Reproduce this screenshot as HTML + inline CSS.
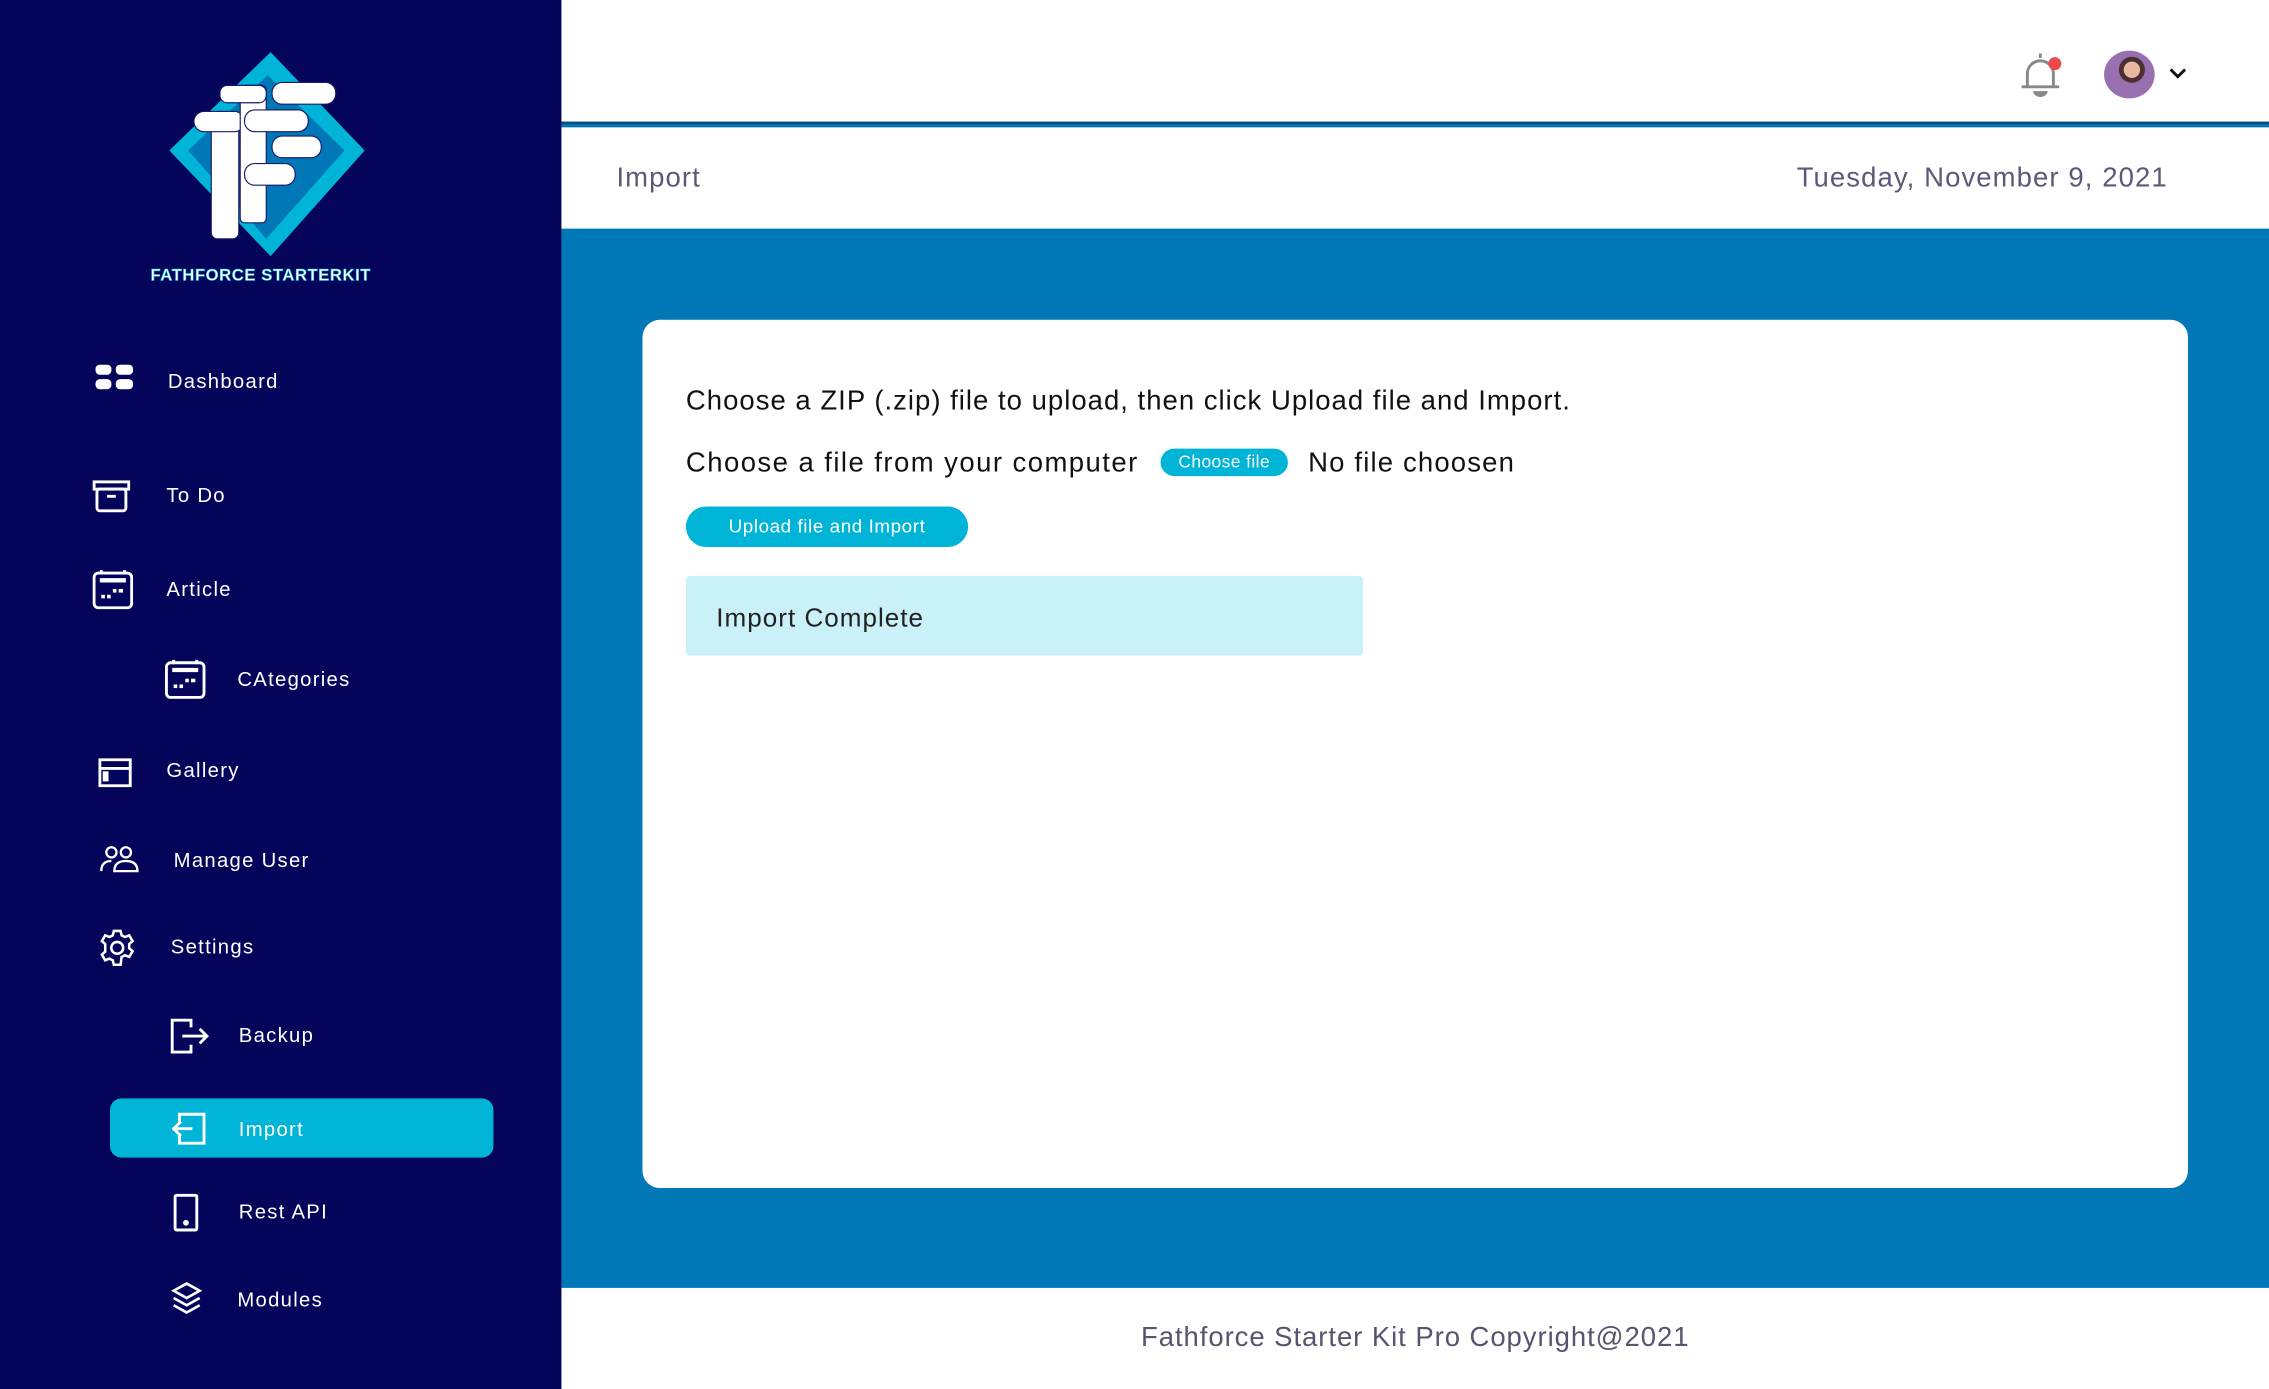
<!DOCTYPE html>
<html><head><meta charset="utf-8"><style>
*{margin:0;padding:0;box-sizing:border-box}
html,body{width:2269px;height:1389px;overflow:hidden;background:#fff}
#w{width:1568px;height:960px;transform:scale(1.44707);transform-origin:0 0;position:relative;font-family:"Liberation Sans",sans-serif}
.sb{position:absolute;left:0;top:0;width:388px;height:960px;background:#03045a}
.it{position:absolute;color:#fff;font-size:14px;letter-spacing:0.9px}
.ic{position:absolute}
.main{position:absolute;left:388px;top:0;width:1180px;height:960px;background:#0077b6}
.top{position:absolute;left:0;top:0;width:1180px;height:86px;background:#fff;border-bottom:2px solid #0a4f7e}
.hd{position:absolute;left:0;top:88px;width:1180px;height:70px;background:#fff;color:#5a5a78;font-size:19px;letter-spacing:0.75px}
.card{position:absolute;left:56px;top:221px;width:1068px;height:600px;background:#fff;border-radius:12px}
.ft{position:absolute;left:0;top:890px;width:1180px;height:70px;background:#fff;color:#55556e;font-size:19px;text-align:center;line-height:70px;letter-spacing:0.65px}
</style></head><body><div id="w">
<div class="sb">
<svg style="position:absolute;left:0;top:0" width="388" height="210">
<polygon points="187,36 252,104 187,177 117,104" fill="#00b4d8"/>
<polygon points="185,52 238,104 184,165 130,104" fill="#0077b6"/>
<g fill="#fff" stroke="#1a1a6a" stroke-width="0.8">
<rect x="146" y="77" width="19" height="88" rx="4"/>
<rect x="134" y="77" width="35" height="14" rx="7"/>
<rect x="166" y="59" width="18" height="95" rx="3"/>
<rect x="152" y="59" width="32" height="12" rx="5"/>
<rect x="188" y="57" width="44" height="15" rx="7"/>
<rect x="169" y="76" width="44" height="15" rx="7"/>
<rect x="188" y="94" width="34" height="15" rx="7"/>
<rect x="169" y="113" width="35" height="15" rx="7"/>
</g>
<text x="104" y="194" fill="#fff" font-size="11.5" font-weight="bold" font-family="Liberation Sans" stroke="#00b4d8" stroke-width="0.4" textLength="152">FATHFORCE STARTERKIT</text>
</svg>
<svg class="ic" style="left:66px;top:252px" width="26" height="18"><rect x="0" y="0" width="11" height="7" rx="3" fill="#fff"/><rect x="14" y="0" width="12" height="7" rx="3" fill="#fff"/><rect x="0" y="10" width="11" height="7" rx="3" fill="#fff"/><rect x="14" y="10" width="12" height="7" rx="3" fill="#fff"/></svg>
<div class="it" style="left:116px;top:255px">Dashboard</div>
<svg class="ic" style="left:64px;top:331px" width="26" height="24" fill="none" stroke="#fff" stroke-width="2"><rect x="1" y="2" width="24" height="5"/><rect x="3" y="7" width="20" height="15" rx="2"/><line x1="10" y1="12" x2="16" y2="12"/></svg>
<div class="it" style="left:115px;top:334px">To Do</div>
<svg class="ic" style="left:64px;top:393px" width="28" height="28" fill="none" stroke="#fff" stroke-width="2"><rect x="1" y="3" width="26" height="24" rx="3"/><line x1="5" y1="8" x2="23" y2="8" stroke-width="3"/><path d="M6 1v3M22 1v3"/><g fill="#fff" stroke="none"><rect x="6" y="18" width="2.5" height="2.5"/><rect x="10" y="18" width="2.5" height="2.5"/><rect x="14" y="14" width="2.5" height="2.5"/><rect x="18" y="14" width="3" height="2.5"/></g></svg>
<div class="it" style="left:115px;top:399px">Article</div>
<svg class="ic" style="left:114px;top:455px" width="28" height="28" fill="none" stroke="#fff" stroke-width="2"><rect x="1" y="3" width="26" height="24" rx="3"/><line x1="5" y1="8" x2="23" y2="8" stroke-width="3"/><path d="M6 1v3M22 1v3"/><g fill="#fff" stroke="none"><rect x="6" y="18" width="2.5" height="2.5"/><rect x="10" y="18" width="2.5" height="2.5"/><rect x="14" y="14" width="2.5" height="2.5"/><rect x="18" y="14" width="3" height="2.5"/></g></svg>
<div class="it" style="left:164px;top:461px">CAtegories</div>
<svg class="ic" style="left:68px;top:524px" width="24" height="20" fill="none" stroke="#fff" stroke-width="2"><rect x="1" y="1" width="21" height="18"/><line x1="1" y1="7" x2="22" y2="7"/><rect x="4" y="10" width="2" height="5" fill="#fff"/></svg>
<div class="it" style="left:115px;top:524px">Gallery</div>
<svg class="ic" style="left:69px;top:584px" width="28" height="20" fill="none" stroke="#fff" stroke-width="1.6"><circle cx="8" cy="5" r="3.5"/><circle cx="18" cy="5" r="3.5"/><path d="M1 18q0-7 7-7M10 18q0-7 8-7t8 7z"/></svg>
<div class="it" style="left:120px;top:586px">Manage User</div>
<svg class="ic" style="left:67px;top:641px" width="28" height="28" viewBox="0 0 24 24" fill="none" stroke="#fff" stroke-width="1.5"><circle cx="12" cy="12" r="3.5"/><path d="M10 2h4l.6 2.6 2 1 2.5-1 2 3.4-2 1.8v2.4l2 1.8-2 3.4-2.5-1-2 1L14 22h-4l-.6-2.6-2-1-2.5 1-2-3.4 2-1.8V9.8l-2-1.8 2-3.4 2.5 1 2-1z"/></svg>
<div class="it" style="left:118px;top:646px">Settings</div>
<svg class="ic" style="left:117px;top:703px" width="28" height="26" fill="none" stroke="#fff" stroke-width="2"><path d="M15 7V2H2v22h13v-5M9 13h17M21 8l5 5-5 5"/></svg>
<div class="it" style="left:165px;top:707px">Backup</div>
<div style="position:absolute;left:76px;top:759px;width:265px;height:41px;background:#00b4d8;border-radius:8px"></div>
<svg class="ic" style="left:117px;top:768px" width="26" height="24" fill="none" stroke="#fff" stroke-width="2"><path d="M7 7V2h17v20H7v-5M2 12h14M8 7l-5 5 5 5"/></svg>
<div class="it" style="left:165px;top:772px">Import</div>
<svg class="ic" style="left:119px;top:824px" width="20" height="28" fill="none" stroke="#fff" stroke-width="2"><rect x="2" y="2" width="15" height="24" rx="1"/><circle cx="9.5" cy="21" r="1" fill="#fff"/></svg>
<div class="it" style="left:165px;top:829px">Rest API</div>
<svg class="ic" style="left:118px;top:886px" width="22" height="24" fill="none" stroke="#fff" stroke-width="1.8"><path d="M11 1L2 6l9 5 9-5zM2 11l9 5 9-5M2 16l9 5 9-5"/></svg>
<div class="it" style="left:164px;top:890px">Modules</div>
</div>
<div class="main">
<div class="top">
<svg style="position:absolute;left:1006px;top:35px" width="34" height="34" fill="none" stroke="#888" stroke-width="2"><path d="M3 25h26M7 25V16a9 9 0 0 1 18 0v9M16 5V2"/><path d="M12 28a4 3 0 0 0 8 0" fill="#888"/><circle cx="26" cy="9" r="4.5" fill="#e84a4a" stroke="none"/></svg>
<div style="position:absolute;left:1066px;top:35px;width:35px;height:33px;border-radius:50%;background:radial-gradient(circle at 55% 40%,#e8b8a0 0 20%,#4a3030 21% 32%,#9870b0 33%)"></div>
<svg style="position:absolute;left:1110px;top:46px" width="14" height="10" fill="none" stroke="#111" stroke-width="2"><path d="M2 2l5 5 5-5"/></svg>
</div>
<div class="hd"><span style="position:absolute;left:38px;top:25px">Import</span><span style="position:absolute;right:70px;top:25px">Tuesday, November 9, 2021</span></div>
<div class="card">
<div style="position:absolute;left:30px;top:46px;font-size:19px;color:#111;letter-spacing:0.7px">Choose a ZIP (.zip) file to upload, then click Upload file and Import.</div>
<div style="position:absolute;left:30px;top:89px;font-size:19px;color:#111;letter-spacing:1px">Choose a file from your computer</div>
<div style="position:absolute;left:358px;top:89px;width:88px;height:19px;background:#00b4d8;border-radius:10px;color:#fff;font-size:12px;text-align:center;line-height:19px;letter-spacing:0.3px">Choose file</div>
<div style="position:absolute;left:460px;top:89px;font-size:19px;color:#111;letter-spacing:0.8px">No file choosen</div>
<div style="position:absolute;left:30px;top:129px;width:195px;height:28px;background:#00b4d8;border-radius:14px;color:#fff;font-size:13px;text-align:center;line-height:28px;letter-spacing:0.4px">Upload file and Import</div>
<div style="position:absolute;left:30px;top:177px;width:468px;height:55px;background:#caf0f8;border-radius:3px;color:#222;font-size:18px;line-height:58px;padding-left:21px;letter-spacing:0.7px">Import Complete</div>
</div>
<div class="ft">Fathforce Starter Kit Pro Copyright@2021</div>
</div>
</div></body></html>
